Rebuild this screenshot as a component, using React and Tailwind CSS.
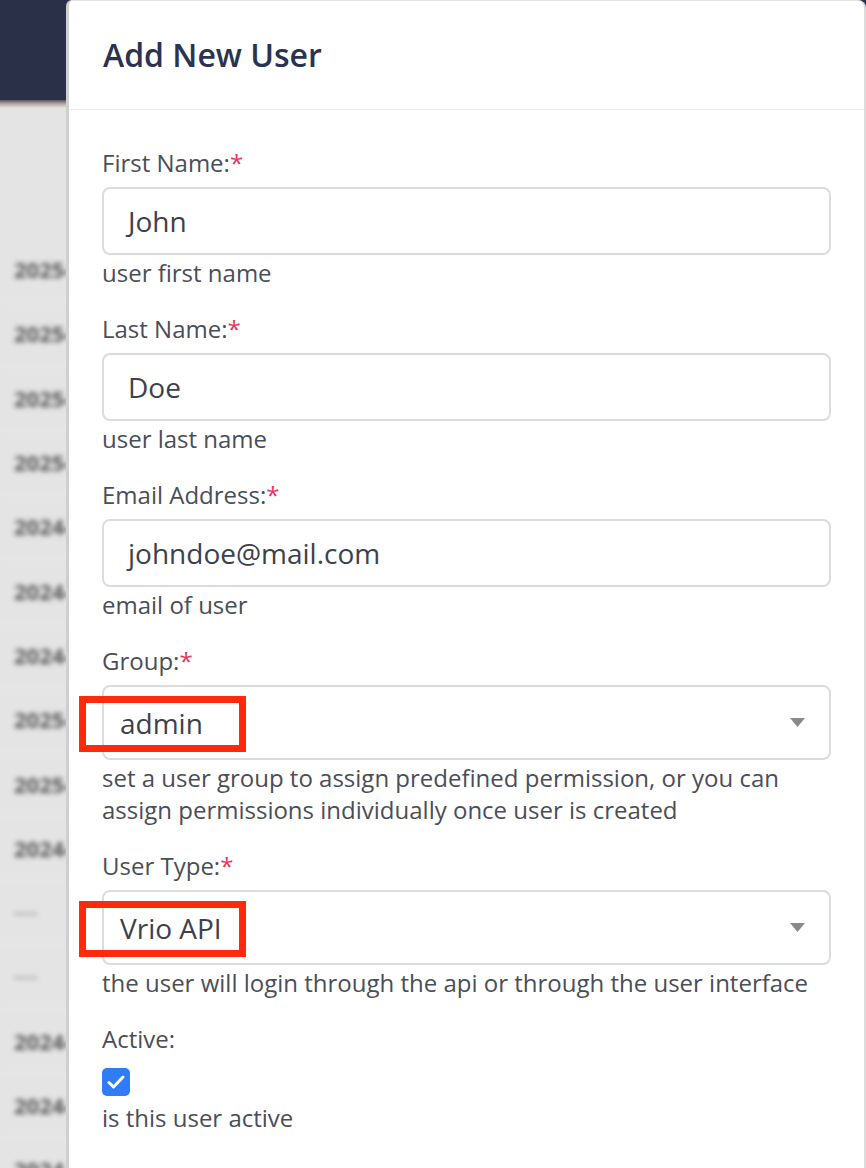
import React from "react";

const rows = ["2025", "2025", "2025", "2025", "2024", "2024", "2024", "2025", "2025", "2024", "----", "----", "2024", "2024", "2024"];

function Label({ children, required = true }) {
  return (
    <div className="text-[24px] leading-[30px] text-[#4a4e58]">
      {children}
      {required && <span className="text-[#e8345a]">*</span>}
    </div>
  );
}

function Help({ children }) {
  return <div className="mt-[2px] text-[24px] leading-[32px] text-[#4a4e58]">{children}</div>;
}

function TextField({ label, value, help }) {
  return (
    <div className="mb-[25px]">
      <Label>{label}</Label>
      <div className="mt-[9px] h-[68px] rounded-[8px] border-2 border-[#dcdcdc] flex items-center pl-[24px] text-[28px] text-[#3d414b]">
        {value}
      </div>
      <Help>{help}</Help>
    </div>
  );
}

function SelectField({ label, value, help }) {
  return (
    <div className="mb-[25px]">
      <Label>{label}</Label>
      <div className="relative mt-[9px] h-[75px] rounded-[8px] border-2 border-[#dcdcdc] flex items-center justify-between pl-[16px] pr-[24px] text-[28px] text-[#3d414b]">
        <span>{value}</span>
        <svg width="15" height="9" viewBox="0 0 15 9">
          <path d="M0 0 L15 0 L7.5 9 Z" fill="#8a8a8a" />
        </svg>
        <div className="absolute left-[-25px] top-[9px] w-[167px] h-[56px] border-[7px] border-[#fd2a0c]" />
      </div>
      <Help>{help}</Help>
    </div>
  );
}

export default function App() {
  return (
    <div
      className="relative w-[866px] h-[1168px] overflow-hidden bg-[#e4e4e4]"
      style={{ fontFamily: '"Open Sans", "Liberation Sans", sans-serif' }}
    >
      {/* background page */}
      <div className="h-[100px] bg-[#2a3048]" />
      <div className="h-[8px] bg-gradient-to-b from-[#5b5560] via-[#b9aaa2] to-[#e4e4e4]" />
      <div className="h-[130px]" />
      <div className="blur-[2.5px]">
        {rows.map((r, i) => (
          <div key={i} className="h-[64.3px] flex items-center pl-[14px] border-b border-[#ececec] text-[22px] font-bold text-[#5a5a5a]">
            {r === "----" ? <span className="text-[#a3a3a3] text-[18px] font-bold">----</span> : r + "-12"}
          </div>
        ))}
      </div>

      {/* drawer panel */}
      <div className="absolute left-[66px] top-0 right-0 bottom-0 bg-white border-l-[3px] border-l-[#cfcfcf] border-r-2 border-r-[#dcdcdc] border-t border-t-[#e2e2e2] rounded-tl-[6px] rounded-tr-[8px]">
        <div className="h-[109px] border-b border-[#ebebeb] flex items-center pl-[34px]">
          <h1 className="text-[32px] font-semibold text-[#2b3350]">Add New User</h1>
        </div>
        <div className="pl-[33px] pr-[33px] pt-[38px]">
          <TextField label="First Name:" value="John" help="user first name" />
          <TextField label="Last Name:" value="Doe" help="user last name" />
          <TextField label="Email Address:" value="johndoe@mail.com" help="email of user" />
          <SelectField
            label="Group:"
            value="admin"
            help={
              <>
                set a user group to assign predefined permission, or you can
                <br />
                assign permissions individually once user is created
              </>
            }
          />
          <SelectField
            label="User Type:"
            value="Vrio API"
            help="the user will login through the api or through the user interface"
          />
          <div>
            <Label required={false}>Active:</Label>
            <div className="mt-[14px] w-[28px] h-[28px] rounded-[5px] bg-[#2f7cf6] flex items-center justify-center">
              <svg width="18" height="14" viewBox="0 0 18 14">
                <path d="M2 7.5 L6.5 12 L16 2" stroke="white" strokeWidth="3" fill="none" strokeLinecap="round" strokeLinejoin="round" />
              </svg>
            </div>
            <div className="mt-[6px] text-[24px] leading-[32px] text-[#4a4e58]">is this user active</div>
          </div>
        </div>
      </div>
    </div>
  );
}
